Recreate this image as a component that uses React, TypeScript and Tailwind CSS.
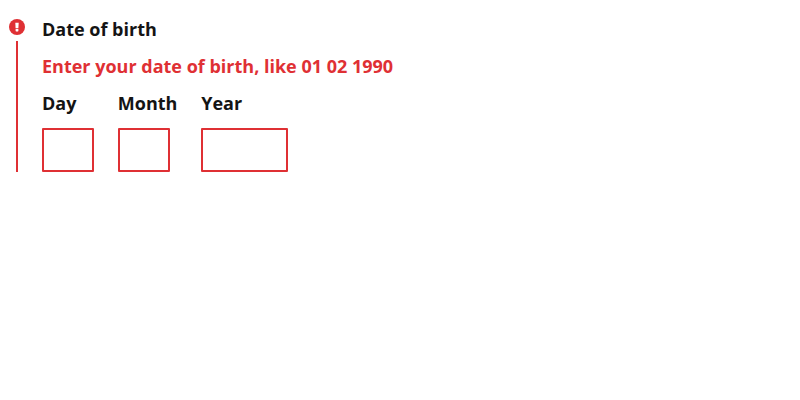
import React from "react";

const fields = [
  { id: "day", label: "Day", width: "w-[52px]" },
  { id: "month", label: "Month", width: "w-[52px]" },
  { id: "year", label: "Year", width: "w-[87px]" },
];

function ErrorMarker() {
  return (
    <div className="flex w-4 flex-col items-center gap-1.5">
      <svg className="block h-4 w-4 shrink-0" viewBox="0 0 16 16" aria-hidden="true">
        <circle cx="8" cy="8" r="8" fill="#df3034" />
        <path d="M6.3 3.8h3.4L9.4 9.2H6.6z" fill="#fff" />
        <rect x="6.6" y="10" width="2.8" height="2.4" rx="0.6" fill="#fff" />
      </svg>
      <div className="w-0.5 grow bg-[#df3034]" />
    </div>
  );
}

export default function App() {
  return (
    <div className="flex h-[172px] gap-[17px] pl-[9px] pt-[19px] font-['Open_Sans',sans-serif] text-[18px] leading-[22px] font-bold text-[#141414]">
      <ErrorMarker />
      <fieldset className="-mt-px">
        <legend className="block">Date of birth</legend>
        <p className="mt-[15px] text-[#df3034]">Enter your date of birth, like 01 02 1990</p>
        <div className="mt-[15px] flex gap-[23.8px]">
          {fields.map((f) => (
            <div key={f.id}>
              <label htmlFor={f.id} className="block">{f.label}</label>
              <input id={f.id} className={`mt-[14px] block h-11 rounded-[1px] border-2 border-[#df3034] bg-white ${f.width}`} />
            </div>
          ))}
        </div>
      </fieldset>
    </div>
  );
}
